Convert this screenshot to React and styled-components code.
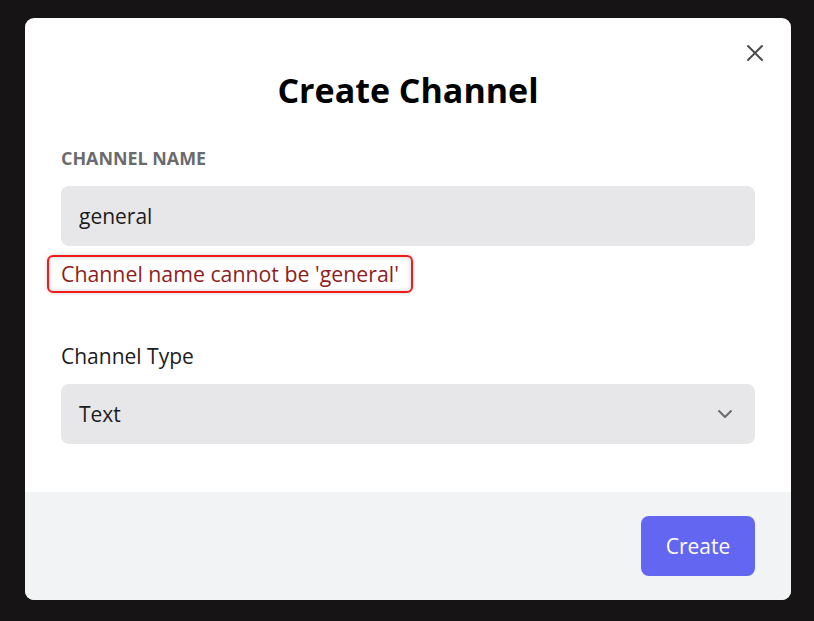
import React from 'react';
import styled, { createGlobalStyle } from 'styled-components';

const Global = createGlobalStyle`
    html, body {
        margin: 0;
        padding: 0;
        background: #161415;
        font-family: "Open Sans", "Noto Sans", sans-serif;
    }
`;

export default function App() {
    return (
        <>
            <Global />
            <Overlay>
                <Modal>
                    <CloseButton aria-label="Close">
                        <svg width="18" height="18" viewBox="0 0 18 18" fill="none">
                            <path d="M2 2L16 16M16 2L2 16" stroke="#4b4b4f" strokeWidth="2" strokeLinecap="round" />
                        </svg>
                    </CloseButton>
                    <Body>
                        <Title>Create Channel</Title>
                        <Field>
                            <Label upper>Channel Name</Label>
                            <Input defaultValue="general" />
                            <ErrorText>Channel name cannot be 'general'</ErrorText>
                        </Field>
                        <Field spaced>
                            <Label>Channel Type</Label>
                            <SelectBox>
                                <span>Text</span>
                                <svg width="16" height="10" viewBox="0 0 16 10" fill="none">
                                    <path d="M2 2L8 8L14 2" stroke="#6b6b70" strokeWidth="2" strokeLinecap="round" strokeLinejoin="round" />
                                </svg>
                            </SelectBox>
                        </Field>
                    </Body>
                    <Footer>
                        <CreateButton>Create</CreateButton>
                    </Footer>
                </Modal>
            </Overlay>
        </>
    )
}

const Overlay = styled.div`
    width: 100vw;
    height: 100vh;
    box-sizing: border-box;
    padding: 18px 0 0 2px;
    display: flex;
    align-items: flex-start;
    justify-content: center;
`;

const Modal = styled.div`
    position: relative;
    width: 766px;
    height: 582px;
    background: #fff;
    border-radius: 9px;
    overflow: hidden;
    display: flex;
    flex-direction: column;
`;

const CloseButton = styled.button`
    position: absolute;
    top: 24px;
    right: 25px;
    width: 22px;
    height: 22px;
    border: none;
    background: none;
    padding: 0;
    display: flex;
    align-items: center;
    justify-content: center;
    cursor: pointer;
`;

const Body = styled.div`
    flex: 1;
    padding: 48px 36px 0;
`;

const Title = styled.h1`
    margin: 0 0 32px;
    text-align: center;
    font-size: 34px;
    line-height: 48px;
    font-weight: 700;
    color: #000;
`;

const Field = styled.div`
    display: flex;
    flex-direction: column;
    margin-top: ${p => (p.spaced ? '51px' : '0')};
`;

const Label = styled.label`
    font-size: ${p => (p.upper ? '17.9px' : '21px')};
    font-weight: ${p => (p.upper ? 700 : 400)};
    text-transform: ${p => (p.upper ? 'uppercase' : 'none')};
    color: ${p => (p.upper ? '#6b6b6e' : '#1c1c1e')};
    line-height: 24px;
    margin-bottom: 16px;
`;

const Input = styled.input`
    height: 60px;
    box-sizing: border-box;
    border: none;
    outline: none;
    border-radius: 8px;
    background: #e7e7e9;
    padding: 0 18px;
    font-family: inherit;
    font-size: 21px;
    color: #1c1c1e;
`;

const ErrorText = styled.div`
    align-self: flex-start;
    margin: 9px 0 0 -14px;
    padding: 4px 12px 4px;
    border: 2px solid #f01b1b;
    border-radius: 6px;
    box-shadow: inset 0 0 4px rgba(0, 0, 0, 0.22), 0 0 4px rgba(0, 0, 0, 0.18);
    color: #8f1d1d;
    font-size: 21.3px;
    line-height: 26px;
`;

const SelectBox = styled.div`
    height: 60px;
    box-sizing: border-box;
    border-radius: 8px;
    background: #e7e7e9;
    padding: 0 22px 0 18px;
    display: flex;
    align-items: center;
    justify-content: space-between;
    font-size: 21px;
    color: #1c1c1e;
`;

const Footer = styled.div`
    height: 108px;
    background: #f2f3f5;
    display: flex;
    align-items: center;
    justify-content: flex-end;
    padding: 0 36px;
`;

const CreateButton = styled.button`
    width: 114px;
    height: 60px;
    border: none;
    border-radius: 8px;
    background: #6366f1;
    color: #fff;
    font-family: inherit;
    font-size: 21px;
    cursor: pointer;
`;
